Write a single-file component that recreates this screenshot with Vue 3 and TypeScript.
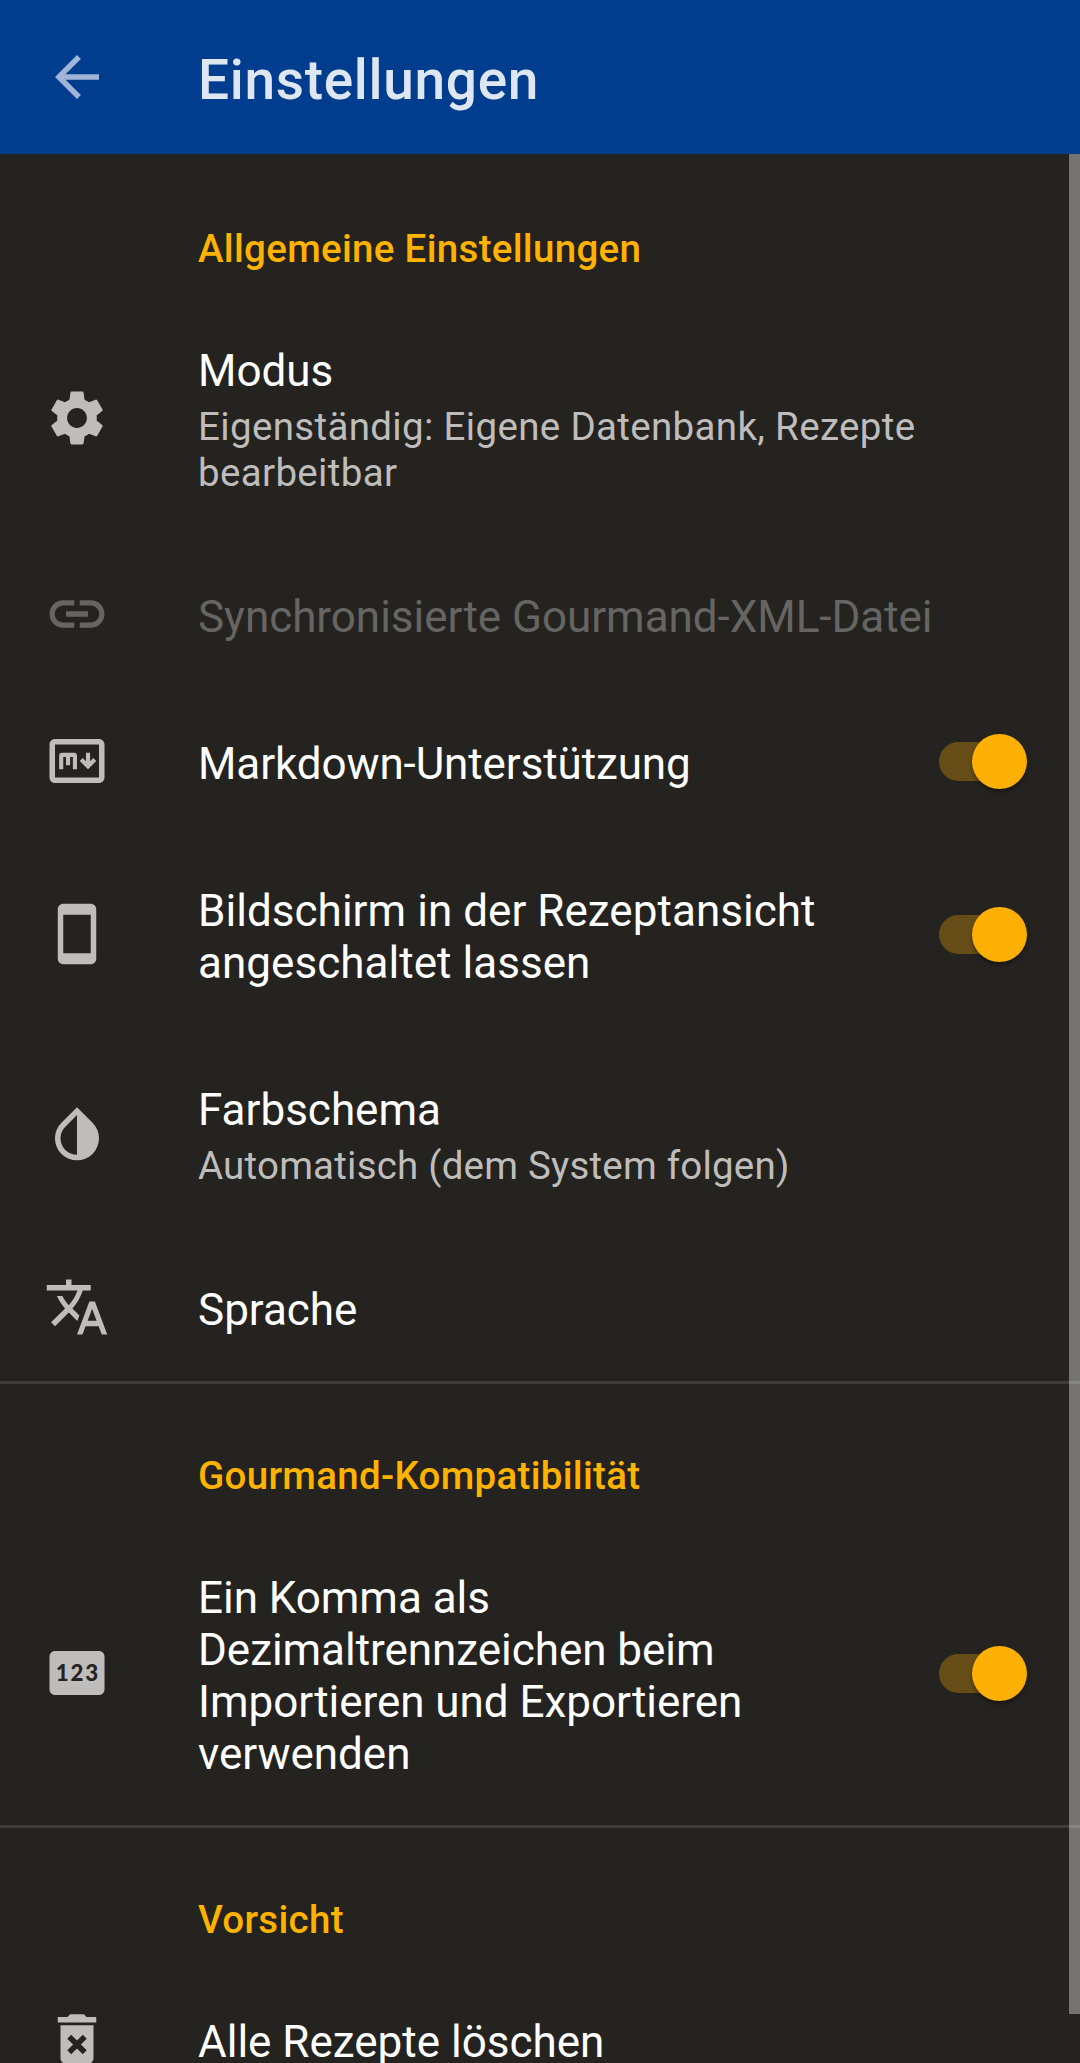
<script setup lang="ts">
type IconName = 'settings' | 'link' | 'markdown' | 'phone' | 'invert' | 'translate' | 'numbers' | 'trash'

interface Item {
  icon: IconName
  title: string[]
  summary?: string[]
  toggle?: boolean
  disabled?: boolean
  height: number
  titleTracking?: number
  summaryTracking?: number
}

interface Section {
  heading: string
  items: Item[]
}

const icons: Record<IconName, string> = {
  settings:
    'M19.14,12.94c0.04,-0.3 0.06,-0.61 0.06,-0.94c0,-0.32 -0.02,-0.64 -0.07,-0.94l2.03,-1.58c0.18,-0.14 0.23,-0.41 0.12,-0.61l-1.92,-3.32c-0.12,-0.22 -0.37,-0.29 -0.59,-0.22l-2.39,0.96c-0.5,-0.38 -1.03,-0.7 -1.62,-0.94L14.4,2.81c-0.04,-0.24 -0.24,-0.41 -0.48,-0.41h-3.84c-0.24,0 -0.43,0.17 -0.47,0.41L9.25,5.35C8.66,5.59 8.12,5.92 7.63,6.29L5.24,5.33c-0.22,-0.08 -0.47,0 -0.59,0.22L2.74,8.87C2.62,9.08 2.66,9.34 2.86,9.48l2.03,1.58C4.84,11.36 4.8,11.69 4.8,12s0.02,0.64 0.07,0.94l-2.03,1.58c-0.18,0.14 -0.23,0.41 -0.12,0.61l1.92,3.32c0.12,0.22 0.37,0.29 0.59,0.22l2.39,-0.96c0.5,0.38 1.03,0.7 1.62,0.94l0.36,2.54c0.05,0.24 0.24,0.41 0.48,0.41h3.84c0.24,0 0.44,-0.17 0.47,-0.41l0.36,-2.54c0.59,-0.24 1.13,-0.56 1.62,-0.94l2.39,0.96c0.22,0.08 0.47,0 0.59,-0.22l1.92,-3.32c0.12,-0.22 0.07,-0.47 -0.12,-0.61L19.14,12.94zM12,15.6c-1.98,0 -3.6,-1.62 -3.6,-3.6s1.62,-3.6 3.6,-3.6s3.6,1.62 3.6,3.6S13.98,15.6 12,15.6z',
  link: 'M3.9,12c0,-1.71 1.39,-3.1 3.1,-3.1h4V7H7c-2.76,0 -5,2.24 -5,5s2.24,5 5,5h4v-1.9H7c-1.71,0 -3.1,-1.39 -3.1,-3.1zM8,13h8v-2H8v2zM17,7h-4v1.9h4c1.71,0 3.1,1.39 3.1,3.1s-1.39,3.1 -3.1,3.1h-4V17h4c2.76,0 5,-2.24 5,-5s-2.24,-5 -5,-5z',
  markdown:
    'M20,4H4C2.9,4 2,4.9 2,6v12c0,1.1 0.9,2 2,2h16c1.1,0 2,-0.9 2,-2V6C22,4.9 21.1,4 20,4zM20,18H4V6h16V18zM5.5,15H7v-4.5h1v3h1.5v-3h1V15H12v-5c0,-0.55 -0.45,-1 -1,-1H6.5c-0.55,0 -1,0.45 -1,1V15zM16,15l3,-3l-1.06,-1.06l-1.19,1.19V9h-1.5v3.13l-1.19,-1.19L13,12L16,15z',
  phone:
    'M17,1.01L7,1c-1.1,0 -1.99,0.9 -1.99,2v18c0,1.1 0.89,2 1.99,2h10c1.1,0 2,-0.9 2,-2V3c0,-1.1 -0.9,-1.99 -2,-1.99zM17,19H7V5h10v14z',
  invert:
    'M17.66,7.93L12,2.27 6.34,7.93c-3.12,3.12 -3.12,8.19 0,11.31C7.9,20.8 9.95,21.58 12,21.58s4.1,-0.78 5.66,-2.34c3.12,-3.12 3.12,-8.19 0,-11.31zM12,19.59c-1.6,0 -3.11,-0.62 -4.24,-1.76C6.62,16.69 6,15.19 6,13.59s0.62,-3.11 1.76,-4.24L12,5.1v14.49z',
  translate:
    'M12.87,15.07l-2.54,-2.51 0.03,-0.03c1.74,-1.94 2.98,-4.17 3.71,-6.53H17V4h-7V2H8v2H1v1.99h11.17C11.5,7.92 10.44,9.75 9,11.35 8.07,10.32 7.3,9.19 6.69,8h-2c0.73,1.63 1.73,3.17 2.98,4.56l-5.09,5.02L4,19l5,-5 3.11,3.11 0.76,-2.04zM18.5,10h-2L12,22h2l1.12,-3h4.75L21,22h2l-4.5,-12zM15.88,17l1.62,-4.33L19.12,17h-3.24z',
  numbers: 'M4,4h16c1.1,0 2,0.9 2,2v12c0,1.1 -0.9,2 -2,2H4c-1.1,0 -2,-0.9 -2,-2V6c0,-1.1 0.9,-2 2,-2z',
  trash:
    'M6,19c0,1.1 0.9,2 2,2h8c1.1,0 2,-0.9 2,-2V7H6v12zM8.46,11.88l1.41,-1.41L12,12.59l2.12,-2.12 1.41,1.41L13.41,14l2.12,2.12 -1.41,1.41L12,15.41l-2.12,2.12 -1.41,-1.41L10.59,14l-2.13,-2.12zM15.5,4l-1,-1h-5l-1,1H5v2h14V4z',
}

const sections: Section[] = [
  {
    heading: 'Allgemeine Einstellungen',
    items: [
      {
        icon: 'settings',
        title: ['Modus'],
        summary: ['Eigenständig: Eigene Datenbank, Rezepte', 'bearbeitbar'],
        height: 246,
        summaryTracking: 0.34,
      },
      {
        icon: 'link',
        title: ['Synchronisierte Gourmand-XML-Datei'],
        disabled: true,
        height: 147,
        titleTracking: -0.03,
      },
      {
        icon: 'markdown',
        title: ['Markdown-Unterstützung'],
        toggle: true,
        height: 147,
        titleTracking: -0.1,
      },
      {
        icon: 'phone',
        title: ['Bildschirm in der Rezeptansicht', 'angeschaltet lassen'],
        toggle: true,
        height: 199,
        titleTracking: 0.04,
      },
      {
        icon: 'invert',
        title: ['Farbschema'],
        summary: ['Automatisch (dem System folgen)'],
        height: 200,
        summaryTracking: 0.21,
      },
      { icon: 'translate', title: ['Sprache'], height: 147 },
    ],
  },
  {
    heading: 'Gourmand-Kompatibilität',
    items: [
      {
        icon: 'numbers',
        title: ['Ein Komma als', 'Dezimaltrennzeichen beim', 'Importieren und Exportieren', 'verwenden'],
        toggle: true,
        height: 303,
        titleTracking: -0.04,
      },
    ],
  },
  {
    heading: 'Vorsicht',
    items: [{ icon: 'trash', title: ['Alle Rezepte löschen'], height: 147 }],
  },
]
</script>

<template>
  <div class="screen">
    <header class="bar">
      <svg class="back" viewBox="0 0 24 24">
        <path d="M20,11H7.83l5.59,-5.59L12,4l-8,8 8,8 1.41,-1.41L7.83,13H20v-2z" />
      </svg>
      <h1>Einstellungen</h1>
    </header>
    <main>
      <section v-for="section in sections" :key="section.heading">
        <h2>{{ section.heading }}</h2>
        <div
          v-for="item in section.items"
          :key="item.icon"
          class="row"
          :class="{ disabled: item.disabled }"
          :style="{ height: item.height + 'px' }"
        >
          <svg class="icon" viewBox="0 0 24 24">
            <path :d="icons[item.icon]" fill-rule="evenodd" />
            <text v-if="item.icon === 'numbers'" x="12.35" y="15" class="digits">123</text>
          </svg>
          <div class="text">
            <div
              v-for="line in item.title"
              :key="line"
              class="title"
              :style="{ letterSpacing: (item.titleTracking ?? 0) + 'px' }"
            >
              {{ line }}
            </div>
            <div
              v-if="item.summary"
              class="summary"
              :style="{ letterSpacing: (item.summaryTracking ?? 0) + 'px' }"
            >
              <div v-for="line in item.summary" :key="line">{{ line }}</div>
            </div>
          </div>
          <div v-if="item.toggle" class="switch"><span class="thumb"></span></div>
        </div>
      </section>
    </main>
    <div class="scrollbar"></div>
  </div>
</template>

<style>
body {
  margin: 0;
  background: #252320;
}
</style>

<style scoped>
.screen {
  position: relative;
  width: 1080px;
  height: 2063px;
  overflow: hidden;
  background: #252320;
  font-family: Roboto, sans-serif;
}
.bar {
  display: flex;
  align-items: center;
  height: 154px;
  background: #003d8f;
}
.back {
  width: 66px;
  height: 66px;
  margin: 0 88px 0 44px;
  fill: #9fb4d6;
}
h1 {
  margin: 6px 0 0;
  font-size: 55px;
  font-weight: 500;
  line-height: 64px;
  letter-spacing: 0.68px;
  color: #dee6f1;
}
section + section {
  box-shadow: inset 0 3px #3f3e3b;
}
h2 {
  box-sizing: border-box;
  height: 141px;
  margin: 0;
  padding: 72px 0 0 198px;
  font-size: 38.5px;
  font-weight: 500;
  line-height: 45px;
  letter-spacing: 0.31px;
  color: #ffb300;
}
.row {
  display: flex;
  align-items: center;
  box-sizing: border-box;
  padding: 0 52px 0 44px;
}
.icon {
  flex: none;
  width: 66px;
  height: 66px;
  margin: -1px 88px 0 0;
  fill: #bebdbb;
}
.digits {
  font: 900 8.1px Lato, sans-serif;
  letter-spacing: 0.7px;
  text-anchor: middle;
  fill: #252320;
}
.text {
  flex: 1;
  align-self: flex-start;
  padding-top: 50px;
  white-space: nowrap;
}
.title {
  font-size: 44px;
  line-height: 52px;
  color: #fff;
}
.summary {
  margin-top: 7px;
  font-size: 38.5px;
  line-height: 46px;
  color: #bebdbc;
}
.disabled .icon {
  fill: #666563;
}
.disabled .title {
  color: #666563;
}
.switch {
  display: flex;
  align-items: center;
  justify-content: flex-end;
  flex: none;
  width: 82px;
  height: 39px;
  margin: -1px 7px 0 0;
  border-radius: 20px;
  background: #674e18;
}
.thumb {
  flex: none;
  width: 55px;
  height: 55px;
  margin-right: -5.6px;
  border-radius: 50%;
  background: #fbb003;
  box-shadow: 0 3px 4px rgba(0, 0, 0, 0.35);
}
.scrollbar {
  position: absolute;
  top: 154px;
  right: 0;
  width: 11px;
  height: 1860px;
  background: rgba(255, 255, 255, 0.367);
}
</style>
